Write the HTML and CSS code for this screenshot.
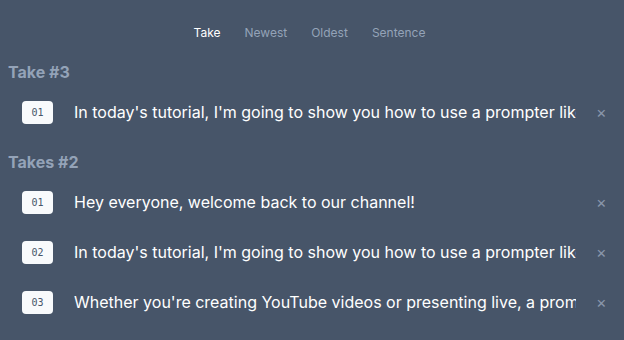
FILE: index.html
```html
<!DOCTYPE html>
<html lang="en">
<head>
    <meta charset="UTF-8">
    <title>Takes</title>
    <link rel="stylesheet" href="styles.css">
</head>
<body>
    <nav class="tabs">
        <span class="tab active">Take</span>
        <span class="tab">Newest</span>
        <span class="tab">Oldest</span>
        <span class="tab">Sentence</span>
    </nav>

    <section class="group">
        <h3 class="group-title">Take #3</h3>
        <div class="row">
            <span class="badge">01</span>
            <span class="line">In today's tutorial, I'm going to show you how to use a prompter like a pro.</span>
            <span class="close">&times;</span>
        </div>
    </section>

    <section class="group">
        <h3 class="group-title">Takes #2</h3>
        <div class="row">
            <span class="badge">01</span>
            <span class="line">Hey everyone, welcome back to our channel!</span>
            <span class="close">&times;</span>
        </div>
        <div class="row">
            <span class="badge">02</span>
            <span class="line">In today's tutorial, I'm going to show you how to use a prompter like a pro.</span>
            <span class="close">&times;</span>
        </div>
        <div class="row">
            <span class="badge">03</span>
            <span class="line">Whether you're creating YouTube videos or presenting live, a prompter can help.</span>
            <span class="close">&times;</span>
        </div>
    </section>
</body>
</html>
```

FILE: styles.css
```css
body {
    margin: 0;
    padding: 0 8px;
    background: #475569;
    font-family: Inter, "Noto Sans", sans-serif;
    color: #fff;
    height: 340px;
    overflow: hidden;
}

.tabs {
    display: flex;
    justify-content: center;
    gap: 24px;
    padding: 25px 5px 0 0;
    height: 50px;
    box-sizing: border-box;
    font-size: 12px;
    line-height: 16px;
}

.tab {
    color: #94a3b8;
}

.tab.active {
    color: #fff;
}

.group + .group {
    margin-top: 3px;
}

.group-title {
    margin: 0;
    height: 20px;
    padding: 12px 0 5px;
    font-size: 16px;
    line-height: 20px;
    font-weight: 700;
    color: #94a3b8;
}

.row {
    display: flex;
    align-items: center;
    height: 50px;
    padding-left: 14px;
}

.badge {
    flex: none;
    width: 31px;
    height: 23px;
    line-height: 23px;
    text-align: center;
    background: #f8fafc;
    border-radius: 4px;
    color: #475569;
    font-family: "DejaVu Sans Mono", monospace;
    font-size: 10px;
}

.line {
    flex: none;
    width: 502px;
    margin-left: 21px;
    overflow: hidden;
    white-space: nowrap;
    font-size: 16px;
}

.close {
    margin-left: 20px;
    color: #8a97ab;
    font-size: 16px;
}
```
